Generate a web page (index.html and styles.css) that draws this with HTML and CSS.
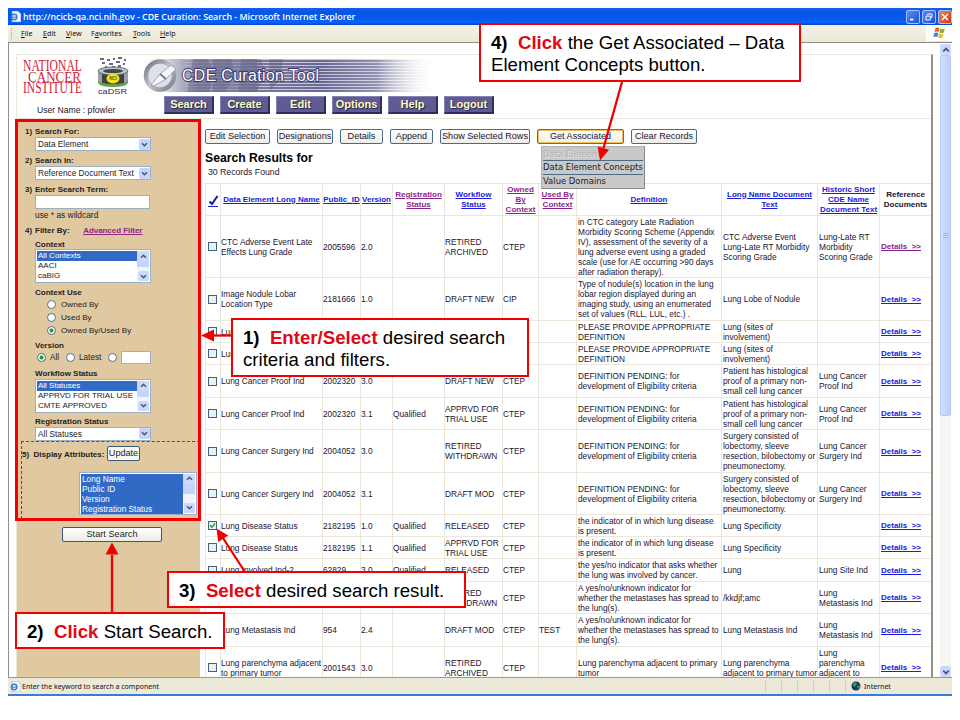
FILE: index.html
```html
<!DOCTYPE html>
<html lang="en">
<head>
<meta charset="utf-8">
<title>CDE Curation: Search</title>
<link rel="stylesheet" href="styles.css">
</head>
<body>
<svg class="defs" width="0" height="0">
  <defs>
    <symbol id="down" viewBox="0 0 8 8"><path d="M1.2 2.6 4 5.4 6.8 2.6" fill="none" stroke="#44577f" stroke-width="1.8"/></symbol>
    <symbol id="up" viewBox="0 0 8 8"><path d="M1.2 5.4 4 2.6 6.8 5.4" fill="none" stroke="#44577f" stroke-width="1.8"/></symbol>
    <symbol id="ie" viewBox="0 0 11 11"><path d="M2 0h6l3 3v8H2z" fill="#f4f6fb" stroke="#8b98b5" stroke-width=".6"/><circle cx="4.2" cy="6" r="2.7" fill="none" stroke="#2f7fd6" stroke-width="1.5"/><path d="M2 6.2h5" stroke="#2f7fd6" stroke-width="1.1"/></symbol>
  </defs>
</svg>
<div class="window">
  <div class="titlebar">
    <svg class="ie"><use href="#ie"/></svg>
    <span class="title">http://ncicb-qa.nci.nih.gov - CDE Curation: Search - Microsoft Internet Explorer</span>
    <span class="wbtn"><svg viewBox="0 0 14 14"><path d="M3.5 10h4" stroke="#fff" stroke-width="2"/></svg></span>
    <span class="wbtn"><svg viewBox="0 0 14 14"><path d="M5.5 5V3.5h5v4H9M3.5 6h5v4.500h-5z" fill="none" stroke="#fff" stroke-width="1.1"/></svg></span>
    <span class="wbtn close"><svg viewBox="0 0 14 14"><path d="M3.500 3.500l7 7M10.500 3.500l-7 7" stroke="#fff" stroke-width="1.700"/></svg></span>
  </div>
  <div class="menubar">
    <span class="grip"></span>
    <span class="m1"><u>F</u>ile</span><span class="m2"><u>E</u>dit</span><span class="m3"><u>V</u>iew</span><span class="m4">F<u>a</u>vorites</span><span class="m5"><u>T</u>ools</span><span class="m6"><u>H</u>elp</span>
    <span class="flag"><svg width="13" height="12" viewBox="0 0 13 12"><path d="M2.500 1q2-1 4 0l-1 4q-2-1-4 0z" fill="#e8602c"/><path d="M7.300 1.500q2 1 4.500 0l-1 4q-2.500 1-4.500 0z" fill="#7cb83a"/><path d="M1.300 6q2-1 4 0l-1 4q-2-1-4 0z" fill="#3f80d8"/><path d="M6.100 6.500q2 1 4.500 0l-1 4q-2.500 1-4.500 0z" fill="#f2bb2b"/></svg></span>
  </div>
  <div class="view">
    <div class="page">
      <div class="header">
        <div class="brand">
          <svg class="nci" width="62" height="38" viewBox="0 0 62 38">
            <g font-family="Liberation Serif, serif" fill="#cf2338">
              <text x="0" y="14" font-size="17" textLength="59" lengthAdjust="spacingAndGlyphs">NATIONAL</text>
              <text x="5" y="24.500" font-size="15.500" textLength="53" lengthAdjust="spacingAndGlyphs">CANCER</text>
              <text x="0" y="36" font-size="16.500" textLength="59" lengthAdjust="spacingAndGlyphs">INSTITUTE</text>
            </g>
          </svg>
          <svg class="cadsr" width="34" height="38" viewBox="0 0 34 38">
            <path d="M4 2h4M11 3h3M17 2h2M22 1h4M28 3h2M6 6h3M13 7h4M20 5h4M27 7h2M9 10h2M16 10h3M22 9h3" stroke="#68688f" stroke-width="2.200"/>
            <path d="M2 14v10q0 4 15 4t15-4V14z" fill="#3d4148"/><path d="M2 15v9q0 2 4 3V14zM28 14v13q4-1 4-3v-9z" fill="#9ba1a6"/>
            <ellipse cx="17" cy="14" rx="15" ry="4" fill="#bfc6c4" stroke="#61686a"/><ellipse cx="17" cy="14" rx="10" ry="2" fill="#41484d"/>
            <path d="M2 23q1 4 15 4t15-4v3q-2 4-15 4T2 26z" fill="#6d9b50"/>
            <ellipse cx="17" cy="21.500" rx="6.500" ry="5" fill="#f2e21c"/><text x="17" y="23.300" font-size="4.500" font-weight="bold" text-anchor="middle" font-family="Liberation Sans, sans-serif" fill="#655b00">NCI</text>
            <text x="2" y="36.500" font-size="7.500" textLength="29" lengthAdjust="spacingAndGlyphs" font-family="Liberation Sans, sans-serif" fill="#26266c">caDSR</text>
          </svg>
          <svg class="banner" width="300" height="34" viewBox="0 0 300 34">
            <defs>
              <linearGradient id="fade"><stop offset="0" stop-color="#fff" stop-opacity="0"/><stop offset=".12" stop-color="#c4c6d3"/><stop offset=".2" stop-color="#8587a6"/><stop offset=".62" stop-color="#6a6995"/><stop offset=".8" stop-color="#77779f" stop-opacity=".8"/><stop offset="1" stop-color="#fff" stop-opacity="0"/></linearGradient>
              <pattern id="lines" width="8" height="3" patternUnits="userSpaceOnUse"><rect width="8" height="1" fill="#fff" opacity=".6"/></pattern>
              <linearGradient id="lens" x2="1" y2="1"><stop offset="0" stop-color="#70747f"/><stop offset=".5" stop-color="#c2c5cb"/><stop offset="1" stop-color="#747884"/></linearGradient>
            </defs>
            <rect width="300" height="33" fill="url(#fade)"/>
            <rect x="120" width="178" height="33" fill="url(#lines)"/>
            <rect x="48" width="72" height="33" fill="url(#lines)" opacity=".35"/>
            <path d="M56 0l14 0 8 12-6 21H50zM76 0h18l4 16-10 17H76zM104 0h20l4 14-8 19h-18zM132 0h14l-3 20-10 12z" fill="#4e4f74" opacity=".3"/>
            <circle cx="23" cy="16.500" r="14" fill="#dfe1e8" stroke="url(#lens)" stroke-width="4.500"/>
            <path d="M14 26l9-11 11-9 5 4-10 10-12 7z" fill="#f5f6f9" stroke="#8d91a3" stroke-width=".8"/><path d="M23 15l6 5" stroke="#777c90" stroke-width="2"/>
            <text x="45" y="22" font-family="Liberation Sans, sans-serif" font-size="15.800" textLength="137" fill="#fff" stroke="#38376a" stroke-width="1.800" paint-order="stroke">CDE Curation Tool</text>
          </svg>
        </div>
        <div class="navrow">
          <span class="user">User Name : pfowler</span>
          <a class="nav">Search</a><a class="nav">Create</a><a class="nav">Edit</a><a class="nav">Options</a><a class="nav">Help</a><a class="nav">Logout</a>
        </div>
      </div>
      <div class="body">
        <div class="side">
          <div class="lbl num first"><i>1)</i>Search For:</div>
          <div class="select">Data Element<b><svg><use href="#down"/></svg></b></div>
          <div class="lbl num"><i>2)</i>Search In:</div>
          <div class="select">Reference Document Text<b><svg><use href="#down"/></svg></b></div>
          <div class="lbl num"><i>3)</i>Enter Search Term:</div>
          <div class="input"></div>
          <div class="hint">use * as wildcard</div>
          <div class="lbl num"><i>4)</i>Filter By:<a class="adv">Advanced Filter</a></div>
          <div class="lbl ctx">Context</div>
          <div class="list"><div class="opts"><p class="on">All Contexts</p><p>AACI</p><p>caBIG</p></div><div class="sb"><b><svg><use href="#up"/></svg></b><b class="last"><svg><use href="#down"/></svg></b></div></div>
          <div class="lbl use">Context Use</div>
          <div class="radio"><span class="r"></span>Owned By</div>
          <div class="radio"><span class="r"></span>Used By</div>
          <div class="radio"><span class="r sel"></span>Owned By/Used By</div>
          <div class="lbl ver">Version</div>
          <div class="vrow"><span class="r sel"></span><span class="va">All</span><span class="r"></span><span class="vl">Latest</span><span class="r"></span><span class="vin"></span></div>
          <div class="lbl">Workflow Status</div>
          <div class="list"><div class="opts"><p class="on">All Statuses</p><p>APPRVD FOR TRIAL USE</p><p>CMTE APPROVED</p></div><div class="sb"><b><svg><use href="#up"/></svg></b><b class="last"><svg><use href="#down"/></svg></b></div></div>
          <div class="lbl reg">Registration Status</div>
          <div class="select">All Statuses<b><svg><use href="#down"/></svg></b></div>
          <div class="attrs">
            <div class="arow"><span>5)&nbsp; Display Attributes:</span><span class="upd">Update</span></div>
            <div class="list big"><div class="opts"><p class="on">Long Name</p><p class="on">Public ID</p><p class="on">Version</p><p class="on">Registration Status</p></div><div class="sb"><b><svg><use href="#up"/></svg></b><b class="last"><svg><use href="#down"/></svg></b></div></div>
          </div>
          <div class="start">Start Search</div>
        </div>
        <div class="main">
          <div class="tools"><span class="btn w65">Edit Selection</span><span class="btn w57">Designations</span><span class="btn w43">Details</span><span class="btn w43">Append</span><span class="btn w91">Show Selected Rows</span><span class="btn w87 hot">Get Associated</span><span class="btn w67">Clear Records</span></div>
          <h1>Search Results for</h1>
          <div class="found">30 Records Found</div>
          <table>
            <colgroup><col class="c1"><col class="c2"><col class="c3"><col class="c4"><col class="c5"><col class="c6"><col class="c7"><col class="c8"><col class="c9"><col class="c10"><col class="c11"><col class="c12"></colgroup>
            <tr class="h32"><th><svg class="tick" width="11" height="12" viewBox="0 0 11 12"><path d="M1.500 6.500l2.500 2.500L9.500 1" fill="none" stroke="#16169c" stroke-width="2"/><path d="M0 11.500h10" stroke="#22c"/></svg></th><th><a>Data Element Long Name</a></th><th><a>Public_ID</a></th><th><a>Version</a></th><th><a class="v">Registration<br>Status</a></th><th><a>Workflow<br>Status</a></th><th><a class="v">Owned<br>By<br>Context</a></th><th><a class="v">Used By<br>Context</a></th><th><a>Definition</a></th><th><a>Long Name Document<br>Text</a></th><th><a>Historic Short<br>CDE Name<br>Document Text</a></th><th>Reference<br>Documents</th></tr>
            <tr class="h62"><td><s></s></td><td>CTC Adverse Event Late<br>Effects Lung Grade</td><td>2005596</td><td>2.0</td><td></td><td>RETIRED<br>ARCHIVED</td><td>CTEP</td><td></td><td>in CTC category Late Radiation<br>Morbidity Scoring Scheme (Appendix<br>IV), assessment of the severity of a<br>lung adverse event using a graded<br>scale (use for AE occurring &gt;90 days<br>after radiation therapy).</td><td>CTC Adverse Event<br>Lung-Late RT Morbidity<br>Scoring Grade</td><td>Lung-Late RT<br>Morbidity<br>Scoring Grade</td><td><a class="v">Details&nbsp; &gt;&gt;</a></td></tr>
            <tr class="h43"><td><s></s></td><td>Image Nodule Lobar<br>Location Type</td><td>2181666</td><td>1.0</td><td></td><td>DRAFT NEW</td><td>CIP</td><td></td><td>Type of nodule(s) location in the lung<br>lobar region displayed during an<br>imaging study, using an enumerated<br>set of values (RLL, LUL, etc.) .</td><td>Lung Lobe of Nodule</td><td></td><td><a>Details&nbsp; &gt;&gt;</a></td></tr>
            <tr class="h22"><td><s></s></td><td>Lung</td><td></td><td></td><td></td><td></td><td></td><td></td><td>PLEASE PROVIDE APPROPRIATE<br>DEFINITION</td><td>Lung (sites of<br>involvement)</td><td></td><td><a>Details&nbsp; &gt;&gt;</a></td></tr>
            <tr class="h22"><td><s></s></td><td>Lung</td><td></td><td></td><td></td><td></td><td></td><td></td><td>PLEASE PROVIDE APPROPRIATE<br>DEFINITION</td><td>Lung (sites of<br>involvement)</td><td></td><td><a>Details&nbsp; &gt;&gt;</a></td></tr>
            <tr class="h33"><td><s></s></td><td>Lung Cancer Proof Ind</td><td>2002320</td><td>3.0</td><td></td><td>DRAFT NEW</td><td>CTEP</td><td></td><td>DEFINITION PENDING: for<br>development of Eligibility criteria</td><td>Patient has histological<br>proof of a primary non-<br>small cell lung cancer</td><td>Lung Cancer<br>Proof Ind</td><td><a>Details&nbsp; &gt;&gt;</a></td></tr>
            <tr class="h32"><td><s></s></td><td>Lung Cancer Proof Ind</td><td>2002320</td><td>3.1</td><td>Qualified</td><td>APPRVD FOR<br>TRIAL USE</td><td>CTEP</td><td></td><td>DEFINITION PENDING: for<br>development of Eligibility criteria</td><td>Patient has histological<br>proof of a primary non-<br>small cell lung cancer</td><td>Lung Cancer<br>Proof Ind</td><td><a>Details&nbsp; &gt;&gt;</a></td></tr>
            <tr class="h43"><td><s></s></td><td>Lung Cancer Surgery Ind</td><td>2004052</td><td>3.0</td><td></td><td>RETIRED<br>WITHDRAWN</td><td>CTEP</td><td></td><td>DEFINITION PENDING: for<br>development of Eligibility criteria</td><td>Surgery consisted of<br>lobectomy, sleeve<br>resection, bilobectomy or<br>pneumonectomy.</td><td>Lung Cancer<br>Surgery Ind</td><td><a>Details&nbsp; &gt;&gt;</a></td></tr>
            <tr class="h42"><td><s></s></td><td>Lung Cancer Surgery Ind</td><td>2004052</td><td>3.1</td><td></td><td>DRAFT MOD</td><td>CTEP</td><td></td><td>DEFINITION PENDING: for<br>development of Eligibility criteria</td><td>Surgery consisted of<br>lobectomy, sleeve<br>resection, bilobectomy or<br>pneumonectomy.</td><td>Lung Cancer<br>Surgery Ind</td><td><a>Details&nbsp; &gt;&gt;</a></td></tr>
            <tr class="h22"><td><s class="ck"><svg viewBox="0 0 7 7"><path d="M1 3.200l1.800 2L6 1.500" fill="none" stroke="#21a121" stroke-width="1.500"/></svg></s></td><td>Lung Disease Status</td><td>2182195</td><td>1.0</td><td>Qualified</td><td>RELEASED</td><td>CTEP</td><td></td><td>the indicator of in which lung disease<br>is present.</td><td>Lung Specificity</td><td></td><td><a>Details&nbsp; &gt;&gt;</a></td></tr>
            <tr class="h22"><td><s></s></td><td>Lung Disease Status</td><td>2182195</td><td>1.1</td><td>Qualified</td><td>APPRVD FOR<br>TRIAL USE</td><td>CTEP</td><td></td><td>the indicator of in which lung disease<br>is present.</td><td>Lung Specificity</td><td></td><td><a>Details&nbsp; &gt;&gt;</a></td></tr>
            <tr class="h23"><td><s></s></td><td>Lung Involved Ind-2</td><td>62829</td><td>3.0</td><td>Qualified</td><td>RELEASED</td><td>CTEP</td><td></td><td>the yes/no indicator that asks whether<br>the lung was involved by cancer.</td><td>Lung</td><td>Lung Site Ind</td><td><a>Details&nbsp; &gt;&gt;</a></td></tr>
            <tr class="h32"><td><s></s></td><td></td><td></td><td></td><td></td><td>RETIRED<br>WITHDRAWN</td><td>CTEP</td><td></td><td>A yes/no/unknown indicator for<br>whether the metastases has spread to<br>the lung(s).</td><td>/kkdjf;amc</td><td>Lung<br>Metastasis Ind</td><td><a>Details&nbsp; &gt;&gt;</a></td></tr>
            <tr class="h33"><td><s></s></td><td>Lung Metastasis Ind</td><td>954</td><td>2.4</td><td></td><td>DRAFT MOD</td><td>CTEP</td><td>TEST</td><td>A yes/no/unknown indicator for<br>whether the metastases has spread to<br>the lung(s).</td><td>Lung Metastasis Ind</td><td>Lung<br>Metastasis Ind</td><td><a>Details&nbsp; &gt;&gt;</a></td></tr>
            <tr class="h42"><td><s></s></td><td>Lung parenchyma adjacent<br>to primary tumor</td><td>2001543</td><td>3.0</td><td></td><td>RETIRED<br>ARCHIVED</td><td>CTEP</td><td></td><td>Lung parenchyma adjacent to primary<br>tumor</td><td>Lung parenchyma<br>adjacent to primary tumor</td><td>Lung<br>parenchyma<br>adjacent to<br>&nbsp;</td><td><a>Details&nbsp; &gt;&gt;</a></td></tr>
          </table>
        </div>
      </div>
    </div>
    <div class="vscroll"><b><svg><use href="#up"/></svg></b><div class="thumb"><span></span></div><b class="end"><svg><use href="#down"/></svg></b></div>
  </div>
  <div class="status"><svg class="ie"><use href="#ie"/></svg><span class="msg">Enter the keyword to search a component</span><span class="panes"><i></i><i></i><i></i><i></i><i></i><i></i></span><svg class="globe" width="10" height="10" viewBox="0 0 10 10"><circle cx="5" cy="5" r="4.500" fill="#16306e"/><path d="M2 2.500l3-1.500 1 2-2 3-2-1zM6 5l3-1v2L7 8.500z" fill="#3c9d46"/></svg><span>Internet</span></div>
</div>

<div class="menu"><p class="off">Data Element</p><p>Data Element Concepts</p><p>Value Domains</p></div>
<div class="frame"></div>
<svg class="arrows" width="960" height="720" viewBox="0 0 960 720">
  <g stroke="#f00000" stroke-width="2.300"><path d="M622 82L603.500 148"/><path d="M232 335.500H212"/><path d="M112 613V555"/><path d="M245 572L223 538"/></g>
  <g fill="#f00000"><path d="M600 160.500l-2.300-14 11.300 3.200z"/><path d="M201 335.500l13-6v12z"/><path d="M112 542.500l-6.500 12h13z"/><path d="M216.500 528.500l1.700 13.500 10-6.500z"/></g>
</svg>
<div class="call call4"><b>4)&nbsp; <em>Click</em></b> the Get Associated – Data<br>Element Concepts button.</div>
<div class="call call1"><b>1)&nbsp; <em>Enter/Select</em></b> desired search<br>criteria and filters.</div>
<div class="call call3"><b>3)&nbsp; <em>Select</em></b> desired search result.</div>
<div class="call call2"><b>2)&nbsp; <em>Click</em></b> Start Search.</div>
</body>
</html>
```

FILE: styles.css
```css
* { box-sizing: border-box; }
html, body { height: 720px; overflow: hidden; }
body { margin: 0; padding: 8px; background: #fff; font-family: "Liberation Sans", Arial, sans-serif; font-size: 8.3px; color: #1c1430; white-space: nowrap; }
p, h1 { margin: 0; }
.defs { position: absolute; }

.window { width: 944px; height: 688px; display: flex; flex-direction: column; border-bottom: 2px solid #3b7bd8; }
.titlebar { height: 17px; flex: none; display: flex; align-items: center; gap: 2px; padding: 0 0 0 2px; background: linear-gradient(#1560e8, #0655e6 25%, #0559ec 65%, #0862fb 85%, #0347c4); }
.ie { width: 11px; height: 11px; flex: none; }
.title { flex: 1; color: #fff; font: 600 8.9px "Open Sans", sans-serif; letter-spacing: -0.02px; }
.wbtn { width: 14px; height: 14px; border: 1px solid #a9c3f7; border-radius: 2px; background: linear-gradient(135deg, #5b8cf3, #1f50d3); }
.wbtn svg { display: block; width: 12px; height: 12px; }
.close { background: linear-gradient(135deg, #ec8264, #cf3b16); }

.menubar { height: 17px; flex: none; display: flex; align-items: center; background: linear-gradient(#f4f2e8, #ece9d8); font: 7.2px "Noto Sans", sans-serif; color: #111; padding: 0 0 1px 3px; }
.menubar u { text-underline-offset: 1px; }
.grip { width: 10px; height: 11px; border-left: 1px dotted #aaa792; }
.m1, .m2 { width: 22px; } .m2 { width: 23px; } .m3 { width: 25px; } .m4 { width: 42px; } .m5 { width: 27px; }
.flag { margin-left: auto; width: 26px; height: 16px; background: #fff; display: flex; align-items: center; justify-content: center; }

.view { flex: 1; min-height: 0; display: flex; justify-content: space-between; border-top: 1px solid #8d8b80; border-left: 1px solid #8d9096; background: #fff; }
.page { margin: 11px 0 0 7px; width: 917px; overflow: hidden; border: 1px solid #ece6da; border-right: 2px solid #93918a; border-bottom: 0; height: 623px; }
.header { height: 64px; border-bottom: 1px solid #ebe6dc; }
.brand { display: flex; height: 41px; padding: 2px 0 0 6px; }
.brand svg { overflow: visible; }
.cadsr { margin-left: 11px; }
.banner { margin: 2px 0 0 7px; }
.navrow { display: flex; gap: 6px; height: 18px; }
.user { width: 141px; padding: 8.5px 0 0 20px; font-size: 8.6px; }
.nav { width: 50px; height: 18px; text-align: center; font-weight: bold; font-size: 11px; line-height: 15px; color: #fdfcc4; background: #5f5c94; border: 1px solid; border-color: #8583b3 #302e5c #302e5c #8583b3; border-width: 1px 2px 2px 1px; text-shadow: 1px 1px 1px #22204a; }

.body { display: flex; }
.side { width: 183px; height: 560px; flex: none; background: #e0c9a1; padding: 0 0 0 18px; color: #241c1c; }
.lbl { height: 12px; margin-top: 3px; line-height: 13px; font-weight: bold; font-size: 8px; }
.lbl.first { margin-top: 0; padding-top: 6px; height: 18px; }
.num { margin-left: -10px; }
.num i { display: inline-block; width: 10px; font-style: normal; }
.adv { color: #93247f; text-decoration: underline; margin-left: 13.5px; letter-spacing: -0.05px; }
.select { width: 116px; height: 14px; background: #fff; border: 1px solid #9bb0c6; padding-left: 2px; display: flex; justify-content: space-between; line-height: 12px; font-size: 8.3px; }
.select b, .sb b { width: 11px; height: 11px; margin: 0.5px; background: #c3d5fb; border-radius: 2px; display: flex; align-items: center; justify-content: center; }
.select svg, .sb svg { width: 7px; height: 7px; }
.input { width: 115px; height: 14px; background: #fff; border: 1px solid #9bb0c6; }
.hint { height: 12px; line-height: 13px; font-size: 8.4px; }
.ctx { margin-top: 2px; height: 11px; }
.list { width: 116px; height: 34px; display: flex; background: #fff; border: 1px solid #9bb0c6; padding: 1px; font-size: 8px; line-height: 10px; }
.opts { flex: 1; }
.opts p { height: 10px; padding-left: 1px; }
.on { background: #316ac5; color: #fff; }
.sb { width: 12px; display: flex; flex-direction: column; justify-content: space-between; background: linear-gradient(#c3d5fb 52%, #f3f3fa 52%); }
.sb b { height: 10px; margin: 0 0 0 1px; background: #cbdafc; }
.use { margin-top: 3px; height: 11px; }
.radio { height: 13.3px; display: flex; align-items: center; padding: 1px 0 0 12px; gap: 5px; font-size: 8.1px; }
.r { width: 9px; height: 9px; flex: none; border: 1px solid #50718c; border-radius: 50%; background: #fff; }
.r.sel { background: radial-gradient(#21a121 0 1.7px, #fff 2.4px); }
.ver { margin-top: 2px; }
.vrow { height: 13px; display: flex; align-items: center; padding-left: 2px; font-size: 8.2px; }
.va { width: 19px; padding-left: 4px; margin-right: 1px; }
.vl { width: 33px; padding-left: 4px; }
.vin { width: 30px; height: 13px; margin-left: 4px; background: #fff; border: 1px solid #9bb0c6; }
.reg { margin-top: 2px; }
.attrs { margin-left: -14px; height: 78px; border-top: 1px dashed #55503f; border-left: 1px dashed #55503f; }
.arow { display: flex; align-items: center; height: 15px; margin-top: 4px; font-weight: bold; font-size: 8px; }
.arow span:first-child { padding-top: 3px; width: 85px; }
.upd { width: 33px; height: 15px; border: 1px solid #39587d; border-radius: 2px; background: #f8f7f2; font-weight: normal; font-size: 9.1px; text-align: center; line-height: 13px; }
.big { width: 118px; height: 43px; margin: 11px 0 0 57px; font-size: 8.3px; }
.start { width: 100px; height: 15px; margin: 8px 0 0 27px; border: 1px solid #39587d; border-radius: 2px; background: linear-gradient(#fff, #ecebe5); text-align: center; font-size: 9.2px; line-height: 13px; }

.main { width: 731px; flex: none; padding-left: 5px; padding-top: 10px; }
.tools { display: flex; gap: 7px; height: 15px; }
.btn { height: 15px; border: 1px solid #4a6a8c; border-radius: 2px; background: linear-gradient(#fff, #eeede6); font-size: 9.1px; line-height: 13px; text-align: center; }
.hot { border-color: #5c6c88; box-shadow: inset 0 0 0 1px #f2be58; }
.w65 { width: 65px; } .w57 { width: 56px; } .w43 { width: 43px; } .w91 { width: 90px; } .w87 { width: 87px; } .w67 { width: 66px; }
h1 { font-size: 12.2px; line-height: 14px; margin-top: 7px; color: #000; }
.found { height: 18px; line-height: 14px; padding-left: 3px; font-size: 8.7px; }
table { table-layout: fixed; width: 727px; border-collapse: separate; border-spacing: 0; border-top: 1px solid #e9e3d4; }
td, th { padding: 0; line-height: 10px; border-right: 1px solid #ece7da; border-bottom: 1px solid #ece7da; text-align: left; vertical-align: middle; }
td:first-child, th:first-child { border-left: 1px solid #ece7da; padding-left: 2px; }
td:nth-child(n+9) { padding-left: 1px; }
th { text-align: center; font-size: 8px; padding: 0; }
a { text-decoration: underline; color: #1a1ae0; }
.nav { text-decoration: none; color: #fdfcc4; }
a.v { color: #8a1f8e; }
td a { font-weight: bold; font-size: 8px; }
.c1 { width: 16px; } .c2 { width: 102px; } .c3 { width: 38px; } .c4 { width: 32px; } .c5 { width: 52px; } .c6 { width: 58px; } .c7 { width: 36px; } .c8 { width: 38px; } .c9 { width: 145px; } .c10 { width: 96px; } .c11 { width: 62px; } .c12 { width: 52px; }
.h22 { height: 22px; } .h23 { height: 23px; } .h32 { height: 32px; } .h33 { height: 33px; } .h42 { height: 42px; } .h43 { height: 43px; } .h62 { height: 62px; }
s { display: block; width: 9px; height: 9px; border: 1px solid #3d6488; background: #eef1f0; }
s svg { display: block; width: 7px; height: 7px; }
.tick { display: block; margin-top: 2px; }

.vscroll { width: 11px; margin-right: 1px; display: flex; flex-direction: column; background: #f6f5f1; border-top: 1px solid #fff; }
.vscroll b { width: 11px; height: 11px; background: #c9d8fc; border-radius: 2px; display: flex; align-items: center; justify-content: center; }
.vscroll svg { width: 8px; height: 8px; }
.thumb { height: 361px; background: linear-gradient(90deg, #d3e0fd, #bccffa); border: 1px solid #b5c8f3; border-radius: 2px; display: flex; align-items: center; justify-content: center; }
.thumb span { width: 5px; height: 5px; background: repeating-linear-gradient(#9db8ee 0 1px, transparent 1px 2px); }
.end { margin-top: auto; }

.status { height: 17px; flex: none; display: flex; align-items: center; background: #ece9d8; border-top: 1px solid #9b998e; padding-left: 2px; font: 7px "Noto Sans", sans-serif; color: #111; }
.msg { margin-left: 1px; flex: 1; letter-spacing: -0.01px; }
.panes { display: flex; width: 86px; height: 12px; }
.panes i { width: 16px; border-left: 1px solid #d3d0c0; flex: none; }
.globe { margin-right: 3px; }
.globe + span { width: 88px; }

.menu { position: absolute; left: 541px; top: 146px; width: 104px; height: 43px; background: #c9c9c9; border: 1px solid #b0b0b0; border-right-color: #888; border-bottom-color: #888; font: 8.45px/13px "DejaVu Sans", sans-serif; color: #1b1b1b; padding: 1px; }
.menu p { height: 14px; border-bottom: 1px solid #4a6a85; }
.menu p:last-child { border: 0; }
.menu .off { color: #b2b2b2; text-shadow: 1px 1px 0 #e5e5e5; height: 13px; }
.frame { position: absolute; left: 15px; top: 119px; width: 186px; height: 402px; border: 3px solid #f00000; }
.arrows { position: absolute; left: 0; top: 0; }
.call { position: absolute; background: #fff; border: 2px solid #f00000; color: #000; font-size: 18.65px; line-height: 22px; padding: 7px 0 0 10px; }
.call em { font-style: normal; color: #e30613; }
.call4 { left: 479px; top: 23px; width: 322px; height: 59px; padding-left: 10px; }
.call1 { left: 231px; top: 318px; width: 298px; height: 59px; }
.call3 { left: 167px; top: 571px; width: 299px; height: 37px; }
.call2 { left: 15px; top: 612px; width: 210px; height: 37px; }
```
